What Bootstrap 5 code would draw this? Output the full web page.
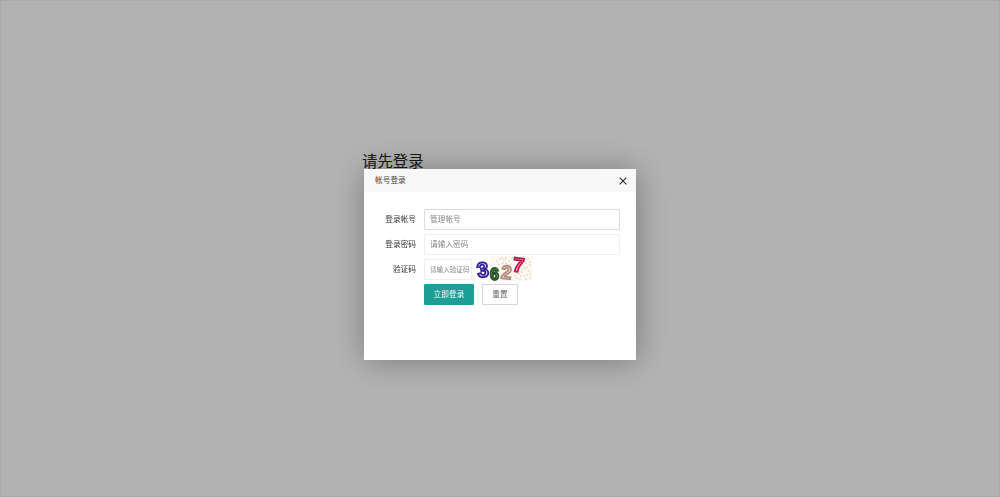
<!DOCTYPE html>
<html lang="zh-CN">
<head>
<meta charset="utf-8">
<title>请先登录</title>
<link rel="stylesheet" href="https://cdn.jsdelivr.net/npm/bootstrap@5.3.0/dist/css/bootstrap.min.css">
<style>
html,body{height:100%;overflow:hidden}
body{background:#fff;font-family:"Liberation Sans","Noto Sans CJK SC",sans-serif;color:#333}
.page-note{position:relative;z-index:1;margin:0;padding:152px 0 0 362px;font-size:15.4px;line-height:20px;font-weight:400;color:#222}
.shade{position:fixed;inset:0;z-index:2;background:rgba(0,0,0,.3);box-shadow:inset 0 0 0 1px rgba(0,0,0,.05)}
.login-box{position:fixed;z-index:3;left:364px;top:169px;width:272px;height:191px;background:#fff;box-shadow:1px 1px 30px rgba(0,0,0,.32)}
.login-head{height:23px;background:#f8f8f8;padding:1px 8px 0 11px;font-size:7.7px;color:#444}
.close-x{width:10px;height:10px;display:block}
.login-form{padding:17px 16px 0 0}
.form-line{height:21px;margin-bottom:4px}
.form-line-code{height:21px;margin-bottom:4px}
.form-name{width:60px;flex:none;padding-right:8px;text-align:right;font-size:7.7px;color:#333}
.form-field{flex:1;height:21px;border:1px solid #eee;border-radius:1px;padding:0 5px;font-size:7.7px;line-height:19px;color:#333;background:#fff;outline:0;min-width:0}
.form-field::placeholder{color:#888}
.field-active{border-color:#dcdcdc}
.field-code{flex:none;width:48px;padding:0 0 0 5px;font-size:6.6px}
.code-pic{display:block;width:60px;height:28px;margin:-3px 0 0 3px;flex:none;overflow:visible}
.btn-row{padding-left:60px}
.btn-go,.btn-clear{height:21px;border-radius:1px;font-size:7.7px;line-height:19px;padding:0;text-align:center}
.btn-go{width:50px;background:#1e9f95;border:1px solid #1e9f95;color:#fff}
.btn-clear{width:36px;margin-left:8px;background:#fff;border:1px solid #d6d6d6;color:#666}
</style>
</head>
<body>
<h1 class="page-note">请先登录</h1>
<div class="shade"></div>
<div class="login-box">
  <div class="login-head d-flex align-items-center justify-content-between">
    <span>帐号登录</span>
    <svg class="close-x" viewBox="0 0 10 10" aria-label="关闭"><path d="M1.7 1.7l6.6 6.6M8.3 1.7l-6.6 6.6" stroke="#333" stroke-width="1.2" fill="none"/></svg>
  </div>
  <form class="login-form">
    <div class="form-line d-flex align-items-center">
      <label class="form-name">登录帐号</label>
      <input class="form-field field-active" type="text" placeholder="管理帐号">
    </div>
    <div class="form-line d-flex align-items-center">
      <label class="form-name">登录密码</label>
      <input class="form-field" type="password" placeholder="请输入密码">
    </div>
    <div class="form-line-code d-flex align-items-center">
      <label class="form-name">验证码</label>
      <input class="form-field field-code" type="text" placeholder="请输入验证码">
      <svg class="code-pic" viewBox="0 0 60 28">
        <rect x="14" y="2" width="44" height="25" fill="#fdfaf3"/>
        <g fill="#b98f88">
          <circle cx="22" cy="7" r=".6"/><circle cx="25" cy="5" r=".6"/><circle cx="28" cy="9" r=".6"/><circle cx="31" cy="4" r=".6"/><circle cx="34" cy="7" r=".6"/><circle cx="24" cy="10" r=".6"/><circle cx="27" cy="4" r=".6"/><circle cx="31" cy="9" r=".6"/><circle cx="37" cy="4" r=".6"/><circle cx="36" cy="10" r=".6"/><circle cx="33" cy="11" r=".6"/><circle cx="29" cy="6" r=".6"/>
          <circle cx="48" cy="6" r=".6"/><circle cx="51" cy="9" r=".6"/><circle cx="53" cy="5" r=".6"/><circle cx="55" cy="11" r=".6"/><circle cx="50" cy="14" r=".6"/><circle cx="54" cy="17" r=".6"/><circle cx="47" cy="18" r=".6"/><circle cx="52" cy="21" r=".6"/><circle cx="55" cy="24" r=".6"/><circle cx="49" cy="22" r=".6"/><circle cx="44" cy="20" r=".6"/><circle cx="46" cy="22" r=".6"/><circle cx="42" cy="24" r=".6"/><circle cx="55" cy="20" r=".6"/><circle cx="50" cy="5" r=".6"/><circle cx="42" cy="19" r=".6"/><circle cx="52" cy="13" r=".6"/><circle cx="48" cy="11" r=".6"/><circle cx="45" cy="25" r=".6"/><circle cx="51" cy="25" r=".6"/><circle cx="55" cy="8" r=".6"/><circle cx="47" cy="15" r=".6"/><circle cx="40" cy="22" r=".6"/>
        </g>
        <text x="2" y="23" transform="rotate(-8 8 16)" font-family="Liberation Sans" font-weight="700" font-size="21" fill="#d8d4f2" stroke="#33219a" stroke-width="1.8">3</text>
        <text x="15" y="25.5" font-family="Liberation Sans" font-weight="700" font-size="16" fill="#c9d9ae" stroke="#26562a" stroke-width="1.8">6</text>
        <text x="26" y="25" transform="rotate(6 32 19)" font-family="Liberation Sans" font-weight="700" font-size="19" fill="#f1e4d6" stroke="#b48c7c" stroke-width="1.7">2</text>
        <text x="38" y="18" transform="rotate(8 44 11)" font-family="Liberation Sans" font-weight="700" font-size="20" fill="#f6d0d8" stroke="#bd1c4c" stroke-width="1.8">7</text>
      </svg>
    </div>
    <div class="btn-row d-flex">
      <button type="button" class="btn btn-go">立即登录</button>
      <button type="button" class="btn btn-clear">重置</button>
    </div>
  </form>
</div>
<script src="https://cdn.jsdelivr.net/npm/bootstrap@5.3.0/dist/js/bootstrap.bundle.min.js"></script>
</body>
</html>
